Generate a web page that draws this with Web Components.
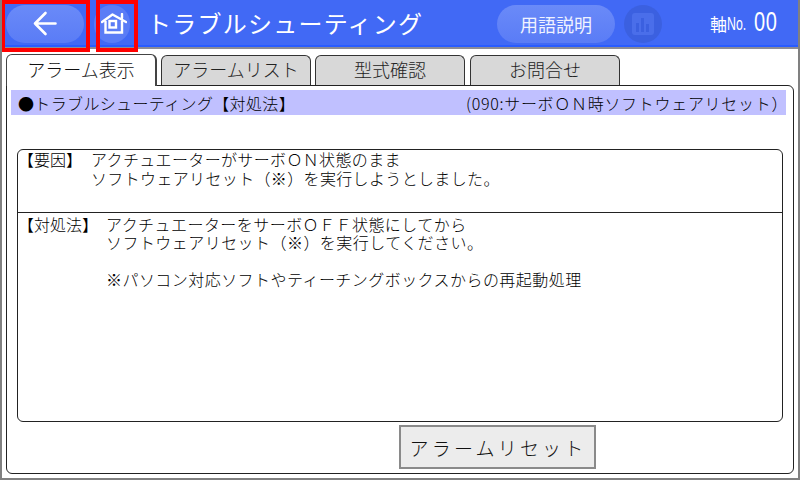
<!DOCTYPE html>
<html lang="ja">

<head>
    <meta charset="utf-8">
    <title>トラブルシューティング</title>
    <style>
        html, body { margin: 0; padding: 0; }
        body {
            width: 800px;
            height: 480px;
            overflow: hidden;
            background: #fff;
            font-family: "Noto Sans CJK JP", "Liberation Sans", sans-serif;
            color: #000;
        }
    </style>
</head>

<body>
    <app-screen>
        <top-bar slot="top" title-text="トラブルシューティング" axis="00"></top-bar>
        <tab-strip slot="tabs" active="0"></tab-strip>
        <tab-panel slot="panel">
            <heading-band slot="band" left="●トラブルシューティング【対処法】" right="(090:サーボＯＮ時ソフトウェアリセット）"></heading-band>
            <info-box slot="box">
                <info-row style="height:63px;padding-top:0;line-height:19px;letter-spacing:.35px" label="【要因】" label-width="73">
                    <div>アクチュエーターがサーボＯＮ状態のまま</div>
                    <div>ソフトウェアリセット（※）を実行しようとしました。</div>
                </info-row>
                <info-row style="flex:1;letter-spacing:.45px" label="【対処法】" label-width="88">
                    <div>アクチュエーターをサーボＯＦＦ状態にしてから</div>
                    <div>ソフトウェアリセット（※）を実行してください。</div>
                    <div>&nbsp;</div>
                    <div>※パソコン対応ソフトやティーチングボックスからの再起動処理</div>
                </info-row>
            </info-box>
            <reset-button slot="action">アラームリセット</reset-button>
        </tab-panel>
    </app-screen>

    <script>
        const JP_FONT = '"Noto Sans CJK JP", "Liberation Sans", sans-serif'

        class AppScreen extends HTMLElement {
            constructor() {
                super()
                this.attachShadow({ mode: 'open' }).innerHTML = `
                    <style>
                        :host { display: flex; flex-direction: column; box-sizing: border-box; width: 800px; height: 480px; position: relative; overflow: hidden; border: 2px solid #808080; border-top: 0; }
                        .body { flex: 1; display: flex; flex-direction: column; padding: 5px 4px 4px 4px; min-height: 0; }
                        /* highlight rectangles drawn over the header */
                        .mark { position: absolute; top: 0; height: 52px; box-sizing: border-box; border: 4px solid #f00; }
                        .back { left: -1px; width: 89px; }
                        .home { left: 94px; width: 42px; }
                    </style>
                    <slot name="top"></slot>
                    <div class="body">
                        <slot name="tabs"></slot>
                        <slot name="panel"></slot>
                    </div>
                    <div class="mark back"></div>
                    <div class="mark home"></div>
                `
            }
        }

        class TopBar extends HTMLElement {
            constructor() {
                super()
                const title = this.getAttribute('title-text')
                const axis = this.getAttribute('axis')
                this.attachShadow({ mode: 'open' }).innerHTML = `
                    <style>
                        :host { display: flex; align-items: center; flex: none; box-sizing: border-box; height: 49px; background: #4169f5; border-bottom: 2px solid #8c8c96; box-shadow: inset 0 -2px #2a5cff; color: #fff; font-family: ${JP_FONT}; }
                        .pill { display: flex; align-items: center; justify-content: center; background: linear-gradient(#6a8af8, #5a7cf6); }
                        .back { width: 78px; height: 38px; border-radius: 19px; margin-left: 4px; }
                        .home { width: 36px; height: 38px; border-radius: 19px; margin-left: 10px; background: #5a7cf6; }
                        .home svg { margin-left: 4px; }
                        h1 { margin: 0 0 2px 17px; width: 350px; font-size: 24px; font-weight: 400; letter-spacing: 1.250px; line-height: 1; white-space: nowrap; }
                        .help { width: 118px; height: 38px; border-radius: 19px; font-size: 18px; color: #f0f3ff; }
                        .chart { width: 38px; height: 38px; border-radius: 19px; background: #3b60e0; margin-left: 9px; display: flex; align-items: center; justify-content: center; }
                        .axis { margin-left: 48px; font-size: 17px; display: flex; align-items: center; white-space: nowrap; }
                        .no { display: inline-block; width: 20px; font-family: "Liberation Sans", sans-serif; font-size: 19px; transform: scaleX(.65); transform-origin: left; }
                        .num { display: inline-block; margin: 0 0 2px 7px; font-family: "Liberation Sans", sans-serif; font-size: 27px; line-height: 1; letter-spacing: 1px; transform: scaleX(.74); transform-origin: left; }
                    </style>
                    <div class="pill back">
                        <svg width="24" height="25" viewBox="0 0 24 25" fill="none" stroke="#fff" stroke-width="2.600" stroke-linecap="round" stroke-linejoin="round"><path d="M22.500 12.500H2M12.500 2 2 12.500 12.500 23"/></svg>
                    </div>
                    <div class="pill home">
                        <svg width="26" height="21" viewBox="0 0 26 21" fill="none" stroke="#fff"><path d="M1 9 11.500 1.500 25 9M21 1v4" stroke-width="2.400" stroke-linecap="round" stroke-linejoin="round"/><path d="M4.500 8v11.500h16.500V8" stroke-width="2.400"/><rect x="8.500" y="8" width="6.500" height="6.500" stroke-width="2.400"/></svg>
                    </div>
                    <h1>${title}</h1>
                    <div class="pill help">用語説明</div>
                    <div class="chart">
                        <svg width="22" height="22" viewBox="0 0 22 22"><rect width="22" height="22" rx="3" fill="#4a6eea"/><path d="M4 10h3v9H4zM9 5h3v14H9zM14 11h3v8h-3z" fill="#3b60e0"/></svg>
                    </div>
                    <div class="axis">軸<span class="no">No.</span><span class="num">${axis}</span></div>
                `
            }
        }

        class TabStrip extends HTMLElement {
            constructor() {
                super()
                const names = [
                    ['アラーム表示', 151], ['アラームリスト', 150], ['型式確認', 150], ['お問合せ', 150]
                ]
                const active = Number(this.getAttribute('active'))
                const tabs = names.map(([n, w], i) =>
                    `<div class="tab ${i === active ? 'on' : ''}" style="width:${w}px">${n}</div>`).join('')
                this.attachShadow({ mode: 'open' }).innerHTML = `
                    <style>
                        :host { display: flex; flex: none; height: 32px; gap: 4px; position: relative; z-index: 1; font-family: ${JP_FONT}; font-weight: 300; }
                        .tab { box-sizing: border-box; height: 30px; margin-top: 1px; background: #d8d8d8; color: #222; border: 1px solid #333; border-bottom: 0; border-radius: 6px 6px 0 0; text-align: center; font-size: 18px; line-height: 26px; white-space: nowrap; }
                        .tab:last-child { margin-left: 1px; }
                        .on { height: 32px; margin-top: 0; background: #fff; color: #111; line-height: 28px; border-color: #444; border-right-width: 2px; }
                    </style>
                    ${tabs}
                `
            }
        }

        class TabPanel extends HTMLElement {
            constructor() {
                super()
                this.attachShadow({ mode: 'open' }).innerHTML = `
                    <style>
                        :host { display: flex; flex-direction: column; flex: 1; min-height: 0; box-sizing: border-box; margin-top: -1px; border: 1px solid #222; border-radius: 0 6px 6px 6px; padding: 4px 7px 4px 4px; background: #fff; }
                        .action { display: flex; padding: 3px 0 0 388px; flex: none; }
                    </style>
                    <slot name="band"></slot>
                    <slot name="box"></slot>
                    <div class="action"><slot name="action"></slot></div>
                `
            }
        }

        class HeadingBand extends HTMLElement {
            constructor() {
                super()
                this.attachShadow({ mode: 'open' }).innerHTML = `
                    <style>
                        :host { display: flex; flex: none; height: 25px; background: #c0c0ff; font-size: 16px; font-weight: 300; line-height: 27px; padding-left: 7px; white-space: nowrap; font-family: ${JP_FONT}; color: #000; }
                        .l { letter-spacing: .35px; }
                        .r { margin-left: 171px; letter-spacing: .7px; }
                    </style>
                    <span class="l">${this.getAttribute('left')}</span>
                    <span class="r">${this.getAttribute('right')}</span>
                `
            }
        }

        class InfoBox extends HTMLElement {
            constructor() {
                super()
                this.attachShadow({ mode: 'open' }).innerHTML = `
                    <style>
                        :host { display: flex; flex-direction: column; flex: 1; min-height: 0; box-sizing: border-box; margin: 34px 0 0 6px; border: 1px solid #222; border-radius: 6px; width: 766px; font-family: ${JP_FONT}; }
                    </style>
                    <slot></slot>
                `
            }
        }

        class InfoRow extends HTMLElement {
            constructor() {
                super()
                const w = this.getAttribute('label-width')
                this.attachShadow({ mode: 'open' }).innerHTML = `
                    <style>
                        :host { display: flex; box-sizing: border-box; font-size: 16px; font-weight: 300; line-height: 18.300px; padding-top: 2px; color: #000; }
                        :host(:not(:last-child)) { border-bottom: 1px solid #222; }
                        .label { flex: none; width: ${w}px; white-space: nowrap; letter-spacing: 0; }
                        .text { white-space: nowrap; }
                    </style>
                    <span class="label">${this.getAttribute('label')}</span>
                    <div class="text"><slot></slot></div>
                `
            }
        }

        class ResetButton extends HTMLElement {
            constructor() {
                super()
                this.attachShadow({ mode: 'open' }).innerHTML = `
                    <style>
                        :host { display: flex; align-items: center; justify-content: center; box-sizing: border-box; width: 197px; height: 44px; padding-left: 1px; background: #ececec; border: 2px solid #8a8a8a; font-size: 19px; font-weight: 300; letter-spacing: 3.200px; color: #111; white-space: nowrap; font-family: ${JP_FONT}; }
                    </style>
                    <slot></slot>
                `
            }
        }

        customElements.define('app-screen', AppScreen)
        customElements.define('top-bar', TopBar)
        customElements.define('tab-strip', TabStrip)
        customElements.define('tab-panel', TabPanel)
        customElements.define('heading-band', HeadingBand)
        customElements.define('info-box', InfoBox)
        customElements.define('info-row', InfoRow)
        customElements.define('reset-button', ResetButton)
    </script>
</body>

</html>
